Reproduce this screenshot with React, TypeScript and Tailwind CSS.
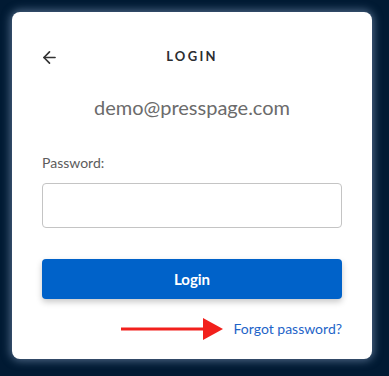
import { ArrowLeft } from 'lucide-react'

function RedArrow() {
  return (
    <svg width="102" height="22" viewBox="0 0 102 22" className="block">
      <rect x="0" y="9.5" width="84" height="3" fill="#f2201c" />
      <polygon points="82,0 102,11 82,22" fill="#f2201c" />
    </svg>
  )
}

export default function App() {
  return (
    <div className="w-[389px] h-[376px] bg-[#011a33] p-3 font-['Lato','Noto_Sans',sans-serif]">
      <div className="h-[347px] w-[360px] bg-white rounded-lg shadow-[0_0_8px_2px_rgba(140,165,200,0.55)] px-[30px] pt-[33px]">
        <div className="flex items-center h-6">
          <button className="w-6 h-6 flex items-center text-[#333]" aria-label="Back">
            <ArrowLeft className="w-[19px] h-[19px] -ml-[2px]" strokeWidth={2.1} />
          </button>
          <div className="flex-1 text-center text-[13px] font-bold tracking-[2.3px] text-[#2b2d31]">LOGIN</div>
          <div className="w-6" />
        </div>
        <div className="mt-6 text-center text-[20px] leading-7 text-[#6b6b6b]">demo@presspage.com</div>
        <label className="block mt-8 text-[14px] leading-5 text-[#5c5c5c]">Password:</label>
        <input
          type="password"
          className="block mt-[10px] w-full h-[45px] rounded border border-[#c4c4c4] outline-none px-3"
        />
        <button className="block mt-[31px] w-full h-10 rounded bg-[#0062c9] text-white text-[15px] font-bold shadow-[0_3px_6px_rgba(0,0,0,0.22)]">
          Login
        </button>
        <div className="mt-5 flex items-center justify-end h-5">
          <RedArrow />
          <a href="#" className="ml-[11px] text-[14px] leading-5 text-[#1e64c8]">Forgot password?</a>
        </div>
      </div>
    </div>
  )
}
